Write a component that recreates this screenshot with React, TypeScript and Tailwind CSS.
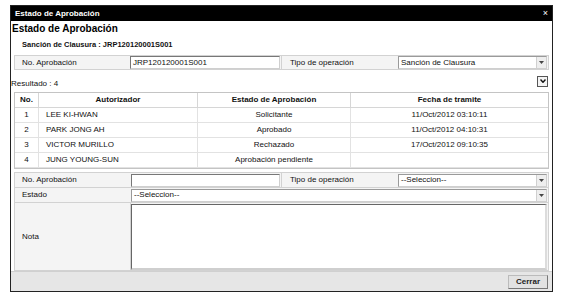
import React from "react";

const Arrow = () => (
  <div className="w-[10px] h-[11px] bg-[#eeeeee] border-l border-[#d0d0d0] flex items-center justify-center">
    <svg width="5" height="3" viewBox="0 0 5 3"><path d="M0 0h5L2.5 3z" fill="#444" /></svg>
  </div>
);

const Select = ({ value, className = "" }: { value: string; className?: string }) => (
  <div className={`h-[13px] bg-white border border-[#9a9a9a] border-b-[#cfcfcf] border-r-[#cfcfcf] flex items-center justify-between ${className}`}>
    <span className="pl-[2px] text-[8px] text-[#111] leading-none">{value}</span>
    <Arrow />
  </div>
);

const Input = ({ value = "", className = "" }: { value?: string; className?: string }) => (
  <div className={`h-[13px] bg-white border border-[#777] border-b-[#cfcfcf] border-r-[#cfcfcf] flex items-center ${className}`}>
    <span className="pl-[2px] text-[8px] text-[#111] leading-none">{value}</span>
  </div>
);

const rows = [
  ["1", "LEE KI-HWAN", "Solicitante", "11/Oct/2012 03:10:11"],
  ["2", "PARK JONG AH", "Aprobado", "11/Oct/2012 04:10:31"],
  ["3", "VICTOR MURILLO", "Rechazado", "17/Oct/2012 09:10:35"],
  ["4", "JUNG YOUNG-SUN", "Aprobación pendiente", ""],
];

export default function App() {
  return (
    <div className="w-[567px] h-[301px] bg-white overflow-hidden text-[#111]" style={{ fontFamily: '"Liberation Sans", Arial, sans-serif' }}>
      <div className="ml-[10px] mt-[5px] w-[543px] h-[287px] border border-[#222] flex flex-col bg-white">
        {/* Title bar */}
        <div className="h-[15px] bg-black text-white flex items-center justify-between px-[4px] shrink-0">
          <span className="text-[8px] font-bold leading-none">Estado de Aprobación</span>
          <span className="text-[9px] leading-none">×</span>
        </div>
        {/* Heading */}
        <div className="h-[17px] flex items-center pl-[1px]">
          <span className="text-[10px] font-bold leading-none text-black">Estado de Aprobación</span>
        </div>
        <div className="h-[14px] flex items-center pl-[11px] mt-[1px]">
          <span className="text-[7.5px] font-bold leading-none text-[#111]">Sanción de Clausura : JRP120120001S001</span>
        </div>
        <div className="px-[3px] mt-[4px]">
          {/* Form row 1 */}
          <div className="h-[15px] border border-[#d2d2d2] bg-[#f4f4f4] flex items-center">
            <div className="w-[115px] pl-[7px] text-[8px] leading-none">No. Aprobación</div>
            <Input value="JRP120120001S001" className="w-[150px]" />
            <div className="w-[117px] h-full border-l border-[#d2d2d2] ml-[1px] flex items-center pl-[8px] text-[8px] leading-none">Tipo de operación</div>
            <Select value="Sanción de Clausura" className="flex-1 mr-[1px]" />
          </div>
          {/* Resultado */}
          <div className="h-[21px] flex items-center justify-between">
            <span className="text-[8px] leading-none -ml-[3px] mt-[6px]">Resultado : 4</span>
            <div className="w-[11px] h-[11px] border border-[#555] bg-[#f4f4f4] flex items-center justify-center mt-[1px] mr-[1px]">
              <svg width="6" height="4" viewBox="0 0 6 4"><path d="M0.5 0.5L3 3.3L5.5 0.5" stroke="#111" strokeWidth="1.4" fill="none" /></svg>
            </div>
          </div>
          {/* Table */}
          <div className="mt-[1px] border border-[#c4c4c4] h-[77px] bg-white">
            <div className="h-[15px] flex border-b border-[#d6d6d6] text-[8px] font-bold leading-none bg-white">
              <div className="w-[24px] flex items-center justify-center border-r border-[#d6d6d6]">No.</div>
              <div className="w-[159px] flex items-center justify-center border-r border-[#d6d6d6]">Autorizador</div>
              <div className="w-[153px] flex items-center justify-center border-r border-[#d6d6d6]">Estado de Aprobación</div>
              <div className="flex-1 flex items-center justify-center">Fecha de tramite</div>
            </div>
            {rows.map((r) => (
              <div key={r[0]} className="h-[15px] flex border-b border-[#e2e2e2] text-[8px] leading-none">
                <div className="w-[24px] flex items-center justify-center border-r border-[#e2e2e2]">{r[0]}</div>
                <div className="w-[159px] flex items-center pl-[7px] border-r border-[#e2e2e2]">{r[1]}</div>
                <div className="w-[153px] flex items-center justify-center border-r border-[#e2e2e2]">{r[2]}</div>
                <div className="flex-1 flex items-center justify-center">{r[3]}</div>
              </div>
            ))}
          </div>
          {/* Bottom form */}
          <div className="mt-[3px] border border-[#d2d2d2] bg-[#f4f4f4] text-[8px] leading-none">
            <div className="h-[15px] flex items-center border-b border-[#d2d2d2]">
              <div className="w-[116px] pl-[7px]">No. Aprobación</div>
              <Input className="w-[149px]" />
              <div className="w-[117px] h-full border-l border-[#d2d2d2] ml-[1px] flex items-center pl-[8px]">Tipo de operación</div>
              <Select value="--Seleccion--" className="flex-1 mr-[1px]" />
            </div>
            <div className="h-[15px] flex items-center border-b border-[#d2d2d2]">
              <div className="w-[116px] pl-[7px]">Estado</div>
              <Select value="--Seleccion--" className="flex-1 mr-[1px]" />
            </div>
            <div className="h-[67px] flex items-center">
              <div className="w-[116px] pl-[7px] h-full flex items-center border-r border-[#d2d2d2]">Nota</div>
              <div className="flex-1 h-[66px] bg-white border border-[#666] border-b-2 border-b-[#cfcfcf] border-r-2 border-r-[#dcdcdc] mr-[1px]" />
            </div>
          </div>
        </div>
        {/* Footer */}
        <div className="mt-auto h-[21px] bg-[#e6e6e6] border-t border-[#d0d0d0] flex items-center justify-end pr-[4px]">
          <div className="w-[40px] h-[14px] bg-[#e2e2e2] border border-[#777] border-t-[#bbb] border-l-[#bbb] flex items-center justify-center text-[8px] font-bold leading-none text-[#222]">Cerrar</div>
        </div>
      </div>
    </div>
  );
}
